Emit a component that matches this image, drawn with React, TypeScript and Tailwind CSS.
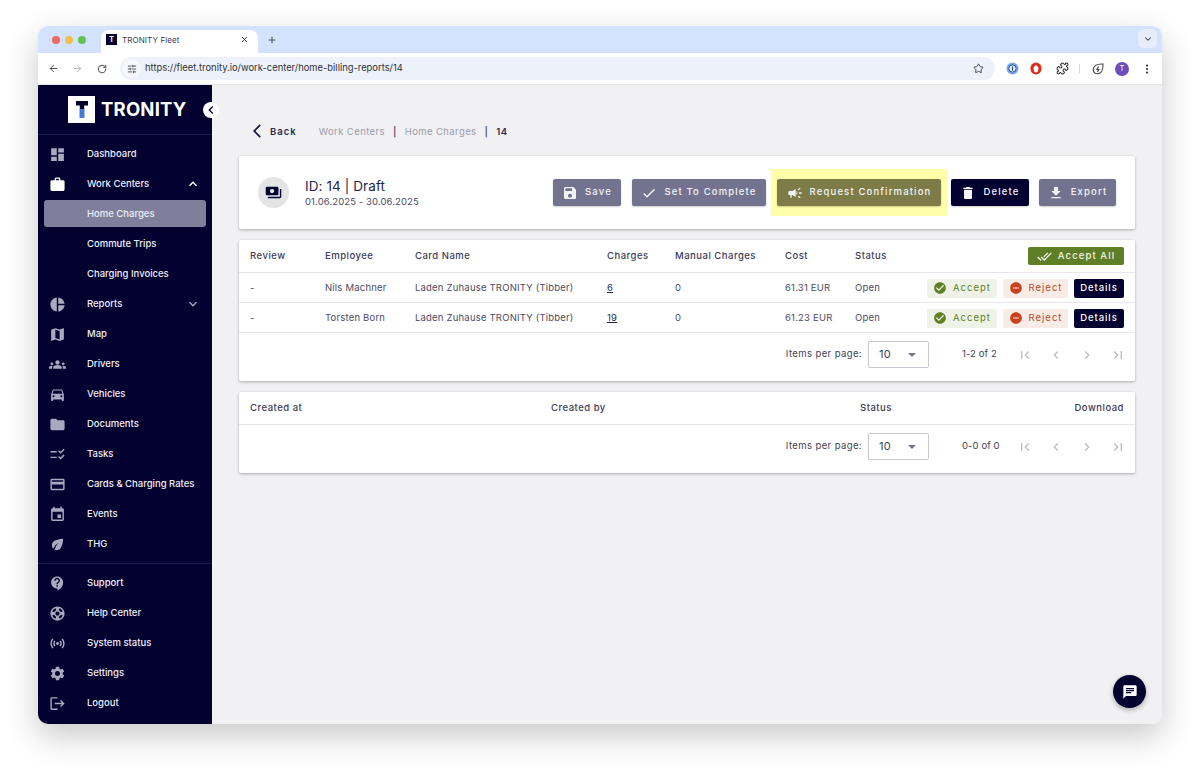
import type { ReactNode } from 'react';
import { ArrowLeft, ArrowRight, ChevronDown, EllipsisVertical, Plus, Puzzle, RotateCw, SlidersHorizontal, Star, X } from 'lucide-react';
import {
  MdArrowBackIosNew,
  MdCampaign,
  MdChat,
  MdCheck,
  MdCheckCircle,
  MdChecklistRtl,
  MdChevronLeft,
  MdChevronRight,
  MdContactSupport,
  MdCreditCard,
  MdDashboard,
  MdDelete,
  MdDirectionsCar,
  MdDoneAll,
  MdEco,
  MdEvent,
  MdExpandLess,
  MdExpandMore,
  MdFileDownload,
  MdFirstPage,
  MdFolder,
  MdGroups,
  MdLastPage,
  MdLogout,
  MdMap,
  MdPayments,
  MdPieChart,
  MdRemoveCircle,
  MdSave,
  MdSensors,
  MdSettings,
  MdSupport,
  MdWork,
} from 'react-icons/md';

const navTop = [
  { label: 'Dashboard', icon: <MdDashboard /> },
  { label: 'Work Centers', icon: <MdWork className="text-white" />, arrow: 'up' },
  { label: 'Home Charges', active: true },
  { label: 'Commute Trips' },
  { label: 'Charging Invoices' },
  { label: 'Reports', icon: <MdPieChart />, arrow: 'down' },
  { label: 'Map', icon: <MdMap /> },
  { label: 'Drivers', icon: <MdGroups /> },
  { label: 'Vehicles', icon: <MdDirectionsCar /> },
  { label: 'Documents', icon: <MdFolder /> },
  { label: 'Tasks', icon: <MdChecklistRtl /> },
  { label: 'Cards & Charging Rates', icon: <MdCreditCard /> },
  { label: 'Events', icon: <MdEvent /> },
  { label: 'THG', icon: <MdEco /> },
];

const navBottom = [
  { label: 'Support', icon: <MdContactSupport /> },
  { label: 'Help Center', icon: <MdSupport /> },
  { label: 'System status', icon: <MdSensors /> },
  { label: 'Settings', icon: <MdSettings /> },
  { label: 'Logout', icon: <MdLogout /> },
];

const rows = [
  { employee: 'Nils Machner', charges: '6', cost: '61.31 EUR' },
  { employee: 'Torsten Born', charges: '19', cost: '61.23 EUR' },
];

function NavItem({ label, icon, arrow, active }: { label: string; icon?: ReactNode; arrow?: string; active?: boolean }) {
  return (
    <div className="relative flex h-[30px] items-center pl-[49px] text-[9.5px] font-medium text-[#eeeef6]">
      {active && <div className="absolute inset-x-[6px] top-[1px] bottom-[2px] rounded-[3px] bg-[#7f7f9b]" />}
      {icon && <span className="absolute left-[10px] flex w-[18px] justify-center text-[17px] text-[#a9a9c0]">{icon}</span>}
      <span className="relative">{label}</span>
      {arrow === 'up' && <MdExpandLess className="absolute right-[11px] text-[16px] text-white" />}
      {arrow === 'down' && <MdExpandMore className="absolute right-[11px] text-[16px] text-[#a9a9c0]" />}
    </div>
  );
}

function Sidebar() {
  return (
    <aside className="relative flex w-[174px] shrink-0 flex-col bg-[#02012f]">
      <div className="flex h-[50px] items-center gap-[6px] border-b border-[#1b1a4a] pl-[30px]">
        <div className="flex h-[27px] w-[27px] items-center justify-center bg-white">
          <svg width="12" height="17" viewBox="0 0 12 17">
            <path d="M0 0H12V4.5H8.2V17H3.8V4.5H0Z" fill="#02012f" />
            <path d="M3.8 8H8.2V17H3.8Z" fill="#3f7fdc" />
          </svg>
        </div>
        <span className="text-[18.5px] leading-none font-bold tracking-[0.2px] text-white">TRONITY</span>
      </div>
      <div className="absolute top-[17px] left-[165px] z-10 flex h-[16px] w-[16px] items-center justify-center rounded-full bg-white">
        <MdChevronLeft className="text-[16px] text-[#02012f]" />
      </div>
      <nav className="border-b border-[#1b1a4a] pt-[4px] pb-[4px]">
        {navTop.map((item) => (
          <NavItem key={item.label} {...item} />
        ))}
      </nav>
      <nav className="pt-[4px]">
        {navBottom.map((item) => (
          <NavItem key={item.label} {...item} />
        ))}
      </nav>
    </aside>
  );
}

function HeadButton({ icon, label, className }: { icon: ReactNode; label: string; className: string }) {
  return (
    <button className={`flex h-[27px] items-center justify-center gap-[7px] rounded-[2px] text-[9.5px] font-medium tracking-[1.15px] text-[#f4f4f8] shadow-[0_1px_2px_rgba(0,0,0,0.2)] ${className}`}>
      <span className="text-[16px]">{icon}</span>
      {label}
    </button>
  );
}

function Pager({ range }: { range: string }) {
  return (
    <div className="flex h-[48px] items-start justify-end pt-[8px] pr-[2px] text-[9.5px] tracking-[0.4px] text-[#3f3f55]">
      <div className="flex h-[27px] items-center">
        <span>Items per page:</span>
        <div className="ml-[6px] flex h-[27px] w-[61px] items-center justify-between rounded-[2px] border border-[#c8c8d4] pr-[12px] pl-[10px] text-[11px]">
          10
          <span className="h-0 w-0 border-x-[4px] border-t-[4px] border-x-transparent border-t-[#73738a]" />
        </div>
        <span className="ml-[33px] w-[35px] whitespace-nowrap tracking-[0.1px]">{range}</span>
        <div className="ml-[12px] flex w-[124px] justify-between text-[16px] text-[#bcbcc9]">
          <span className="flex w-[31px] justify-center"><MdFirstPage /></span>
          <span className="flex w-[31px] justify-center"><MdChevronLeft /></span>
          <span className="flex w-[31px] justify-center"><MdChevronRight /></span>
          <span className="flex w-[31px] justify-center"><MdLastPage /></span>
        </div>
      </div>
    </div>
  );
}

const tableCols = 'grid grid-cols-[75px_90px_192px_68px_110px_70px_60px_1fr] items-center px-[11px]';

function Main() {
  return (
    <main className="relative flex-1 bg-[#f1f1f4] px-[27px]">
      <div className="flex h-[71px] items-end pb-[17px] pl-[10px] text-[9.5px] tracking-[0.4px]">
        <MdArrowBackIosNew className="text-[16px] text-[#15143f]" />
        <span className="ml-[5px] font-semibold tracking-[1px] text-[#2b2a50]">Back</span>
        <span className="ml-[22px] text-[#9a9aac]">Work Centers</span>
        <span className="ml-[8px] font-semibold text-[#55556c]">|</span>
        <span className="ml-[8px] text-[#9a9aac]">Home Charges</span>
        <span className="ml-[8px] font-semibold text-[#55556c]">|</span>
        <span className="ml-[8px] font-semibold text-[#2b2a50]">14</span>
      </div>

      <section className="flex h-[73px] items-center rounded-[2px] bg-white pr-[19px] pl-[19px] shadow-[0_1px_3px_rgba(0,0,0,0.3)]">
        <div className="flex h-[31px] w-[31px] items-center justify-center rounded-full bg-[#e4e4e4] text-[17px] text-[#02012f]">
          <MdPayments />
        </div>
        <div className="ml-[16px]">
          <div className="text-[13.5px] leading-[18px] tracking-[0.1px] text-[#26264a]">ID: 14 | Draft</div>
          <div className="text-[9.5px] leading-[14px] tracking-[0.1px] text-[#4b4b63]">01.06.2025 - 30.06.2025</div>
        </div>
        <div className="ml-auto flex items-center gap-[10px]">
          <HeadButton icon={<MdSave />} label="Save" className="w-[68px] bg-[#73738f]" />
          <HeadButton icon={<MdCheck />} label="Set To Complete" className="ml-[1px] w-[134px] bg-[#73738f]" />
          <div className="-my-[10px] mr-[-6px] ml-[-5px] bg-[#feffa8] px-[6px] py-[10px]">
            <HeadButton icon={<MdCampaign />} label="Request Confirmation" className="w-[164px] bg-[#7d7c48]" />
          </div>
          <HeadButton icon={<MdDelete />} label="Delete" className="w-[78px] bg-[#02012f]" />
          <HeadButton icon={<MdFileDownload />} label="Export" className="w-[77px] bg-[#73738f]" />
        </div>
      </section>

      <section className="mt-[11px] rounded-[2px] bg-white shadow-[0_1px_3px_rgba(0,0,0,0.3)]">
        <div className={`${tableCols} h-[33px] border-b border-[#e6e6ec] text-[9.5px] font-medium tracking-[0.5px] text-[#3c3c58]`}>
          <span>Review</span>
          <span>Employee</span>
          <span>Card Name</span>
          <span>Charges</span>
          <span>Manual Charges</span>
          <span>Cost</span>
          <span>Status</span>
          <button className="ml-auto flex h-[18px] w-[96px] items-center justify-center gap-[6px] rounded-[2px] bg-[#5f7f27] text-[9.5px] font-medium tracking-[1.1px] text-[#f2f5ea]">
            <MdDoneAll className="text-[15px]" />
            Accept All
          </button>
        </div>
        {rows.map((row) => (
          <div key={row.employee} className={`${tableCols} h-[30px] border-b border-[#e6e6ec] pt-[1px] text-[9.5px] tracking-[0.2px] text-[#4b4b63]`}>
            <span>-</span>
            <span>{row.employee}</span>
            <span>Laden Zuhause TRONITY (Tibber)</span>
            <span className="text-[#26264a] underline">{row.charges}</span>
            <span>0</span>
            <span>{row.cost}</span>
            <span>Open</span>
            <div className="flex justify-end gap-[6px]">
              <button className="flex h-[19px] w-[70px] items-center justify-center gap-[6px] rounded-[2px] bg-[#eef2e7] tracking-[1px] text-[#5f7f27]">
                <MdCheckCircle className="text-[14px]" />
                Accept
              </button>
              <button className="flex h-[19px] w-[65px] items-center justify-center gap-[6px] rounded-[2px] bg-[#f9ebe6] tracking-[1px] text-[#b8482a]">
                <MdRemoveCircle className="text-[14px] text-[#c8421c]" />
                Reject
              </button>
              <button className="h-[19px] w-[50px] rounded-[2px] bg-[#02012f] font-medium tracking-[0.9px] text-white">Details</button>
            </div>
          </div>
        ))}
        <Pager range="1-2 of 2" />
      </section>

      <section className="mt-[11px] rounded-[2px] bg-white shadow-[0_1px_3px_rgba(0,0,0,0.3)]">
        <div className="grid h-[33px] grid-cols-[301px_309px_1fr_auto] items-center border-b border-[#e6e6ec] px-[11px] text-[9.5px] font-medium tracking-[0.5px] text-[#3c3c58]">
          <span>Created at</span>
          <span>Created by</span>
          <span>Status</span>
          <span>Download</span>
        </div>
        <Pager range="0-0 of 0" />
      </section>

      <button className="absolute right-[16px] bottom-[16px] flex h-[33px] w-[33px] items-center justify-center rounded-full bg-[#02012f] text-[16px] text-white shadow-[0_2px_5px_rgba(0,0,0,0.3)]">
        <MdChat />
      </button>
    </main>
  );
}

function BrowserChrome() {
  return (
    <div className="font-['Inter',sans-serif] text-[#3c4043]">
      <div className="flex h-[27px] items-end bg-[#d3e3fd]">
        <div className="flex h-[27px] items-center gap-[5px] self-center pl-[14px]">
          <span className="h-[8px] w-[8px] rounded-full bg-[#ed6a5e]" />
          <span className="h-[8px] w-[8px] rounded-full bg-[#f4bf4f]" />
          <span className="h-[8px] w-[8px] rounded-full bg-[#61c554]" />
        </div>
        <div className="ml-[15px] flex h-[23px] w-[157px] items-center rounded-t-[8px] bg-white pr-[6px] pb-[4px] pl-[5px]">
          <span className="flex h-[11px] w-[11px] items-center justify-center bg-[#02012f] text-[7px] leading-none font-bold text-white">T</span>
          <span className="ml-[5px] text-[8px] tracking-[0.1px]">TRONITY Fleet</span>
          <X className="mr-[3px] ml-auto h-[9px] w-[9px] text-[#333]" strokeWidth={2.5} />
        </div>
        <Plus className="mb-[8px] ml-[9px] h-[10px] w-[10px]" strokeWidth={2.2} />
        <div className="mr-[5px] mb-[5px] ml-auto flex h-[19px] w-[19px] items-center justify-center rounded-[6px] bg-[#e6eefc]">
          <ChevronDown className="h-[10px] w-[10px]" strokeWidth={2.5} />
        </div>
      </div>
      <div className="flex h-[32px] items-center border-b border-[#e3e3e8] bg-white pr-[9px] pl-[10px]">
        <ArrowLeft className="h-[11px] w-[11px]" />
        <ArrowRight className="ml-[13px] h-[11px] w-[11px] text-[#b0b3b8]" />
        <RotateCw className="ml-[14px] h-[10px] w-[10px]" strokeWidth={2.2} />
        <div className="ml-[13px] flex h-[23px] w-[875px] items-center rounded-full bg-[#edf2fa] pr-[11px] pl-[2px]">
          <span className="flex h-[19px] w-[19px] items-center justify-center rounded-full bg-[#f6f8fd]">
            <SlidersHorizontal className="h-[10px] w-[10px]" />
          </span>
          <span className="ml-[4px] text-[9.4px] text-[#2f3136]">https://fleet.tronity.io/work-center/home-billing-reports/14</span>
          <Star className="ml-auto h-[11px] w-[11px]" strokeWidth={2} />
        </div>
        <div className="ml-auto flex items-center">
          <svg width="13" height="13" viewBox="0 0 13 13">
            <circle cx="6.5" cy="6.5" r="6" fill="#7aa7e8" />
            <circle cx="6.5" cy="6.5" r="3.6" fill="#fff" stroke="#1d4f9e" />
            <rect x="5.8" y="4.3" width="1.4" height="4.4" fill="#1d4f9e" />
          </svg>
          <svg className="ml-[11.5px]" width="12" height="13" viewBox="0 0 12 13">
            <ellipse cx="6" cy="6.5" rx="5.6" ry="6" fill="#d92d1d" />
            <path d="M3.5 5.5 6 3 8.5 5.5 8 9.5 6 10.5 4 9.5Z" fill="#fff" />
          </svg>
          <Puzzle className="ml-[13.5px] h-[13px] w-[13px] text-[#333]" strokeWidth={2} />
          <span className="ml-[10.5px] h-[10px] w-px bg-[#d5d9e0]" />
          <svg className="ml-[12px]" width="12" height="12" viewBox="0 0 12 12" fill="none" stroke="#444" strokeWidth="1.1">
            <path d="M11 1C6 .8 1.5 2.5 1.2 6.5c-.1 2.6 1.8 4.3 4.3 4.2C9.5 10.5 11.2 6 11 1Z" />
            <path d="M6.8 3.5 4.8 6.5h2.2L5.2 9" />
          </svg>
          <span className="ml-[11px] flex h-[14px] w-[14px] items-center justify-center rounded-full bg-[#6b4fbb] text-[7.5px] text-white">T</span>
          <EllipsisVertical className="ml-[12px] h-[12px] w-[12px]" strokeWidth={2.5} />
        </div>
      </div>
    </div>
  );
}

export default function App() {
  return (
    <div className="h-[774px] overflow-hidden bg-white pt-[26px] pl-[38px]">
      <div className="flex h-[698px] w-[1124px] flex-col overflow-hidden rounded-[10px] shadow-[0_12px_32px_rgba(0,0,0,0.22)]">
        <BrowserChrome />
        <div className="flex flex-1 font-['Inter','Liberation_Sans',sans-serif]">
          <Sidebar />
          <Main />
        </div>
      </div>
    </div>
  );
}
